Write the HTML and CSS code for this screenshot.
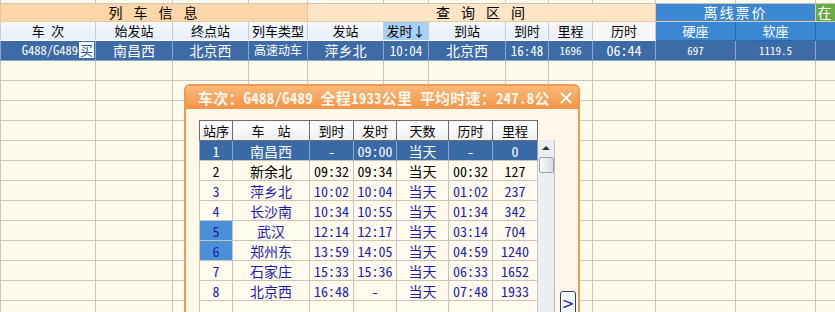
FILE: index.html
```html
<!DOCTYPE html>
<html lang="zh-CN">
  <head>
    <meta charset="UTF-8" />
    <meta name="viewport" content="width=device-width, initial-scale=1.0" />
    <title>列车查询</title>
    <link rel="stylesheet" href="styles.css">
  </head>
  <body>
    <table class="sheet">
      <colgroup>
        <col class="w-train"><col class="w-from"><col class="w-to"><col class="w-type">
        <col class="w-dep"><col class="w-dtime"><col class="w-arr"><col class="w-atime">
        <col class="w-km"><col class="w-dur"><col class="w-seat"><col class="w-seat"><col class="w-rest">
      </colgroup>
      <tr class="strip"><td></td><td></td><td></td><td></td><td></td><td></td><td></td><td></td><td></td><td></td><td></td><td></td><td></td></tr>
      <tr class="group">
        <td colspan="4" class="g-info">列 车 信 息</td>
        <td colspan="6" class="g-query">查 询 区 间</td>
        <td colspan="2" class="g-price">离线票价</td>
        <td class="g-online">在</td>
      </tr>
      <tr class="head">
        <td>车 次</td><td>始发站</td><td>终点站</td><td>列车类型</td><td>发站</td>
        <td class="sorted">发时↓</td><td>到站</td><td>到时</td><td>里程</td><td class="plain">历时</td>
        <td class="price">硬座</td><td class="price">软座</td><td class="price"></td>
      </tr>
      <tr class="selected">
        <td class="train">G488/G489<span class="buy">买</span></td>
        <td>南昌西</td><td>北京西</td><td class="kind">高速动车</td><td>萍乡北</td>
        <td class="time">10:04</td><td>北京西</td><td class="time">16:48</td>
        <td class="small">1696</td><td>06:44</td><td class="small">697</td><td class="small">1119.5</td><td></td>
      </tr>
      <tr><td></td><td></td><td></td><td></td><td></td><td></td><td></td><td></td><td></td><td></td><td></td><td></td><td></td></tr>
      <tr><td></td><td></td><td></td><td></td><td></td><td></td><td></td><td></td><td></td><td></td><td></td><td></td><td></td></tr>
      <tr><td></td><td></td><td></td><td></td><td></td><td></td><td></td><td></td><td></td><td></td><td></td><td></td><td></td></tr>
      <tr><td></td><td></td><td></td><td></td><td></td><td></td><td></td><td></td><td></td><td></td><td></td><td></td><td></td></tr>
      <tr><td></td><td></td><td></td><td></td><td></td><td></td><td></td><td></td><td></td><td></td><td></td><td></td><td></td></tr>
      <tr><td></td><td></td><td></td><td></td><td></td><td></td><td></td><td></td><td></td><td></td><td></td><td></td><td></td></tr>
      <tr><td></td><td></td><td></td><td></td><td></td><td></td><td></td><td></td><td></td><td></td><td></td><td></td><td></td></tr>
      <tr><td></td><td></td><td></td><td></td><td></td><td></td><td></td><td></td><td></td><td></td><td></td><td></td><td></td></tr>
      <tr><td></td><td></td><td></td><td></td><td></td><td></td><td></td><td></td><td></td><td></td><td></td><td></td><td></td></tr>
      <tr><td></td><td></td><td></td><td></td><td></td><td></td><td></td><td></td><td></td><td></td><td></td><td></td><td></td></tr>
      <tr><td></td><td></td><td></td><td></td><td></td><td></td><td></td><td></td><td></td><td></td><td></td><td></td><td></td></tr>
      <tr><td></td><td></td><td></td><td></td><td></td><td></td><td></td><td></td><td></td><td></td><td></td><td></td><td></td></tr>
      <tr><td></td><td></td><td></td><td></td><td></td><td></td><td></td><td></td><td></td><td></td><td></td><td></td><td></td></tr>
    </table>

    <!-- Fenêtre des arrêts -->
    <div class="popup">
      <div class="popup-title">
        <span>车次：G488/G489 全程1933公里 平均时速：247.8公</span>
        <svg class="close" width="12" height="12" viewBox="0 0 12 12">
          <path d="M1.5 1.5 L10.5 10.5 M10.5 1.5 L1.5 10.5" stroke="#fff" stroke-width="2" stroke-linecap="round" fill="none" />
        </svg>
      </div>
      <div class="popup-body">
        <table class="stops">
          <colgroup>
            <col class="s-seq"><col class="s-name"><col class="s-arr"><col class="s-dep">
            <col class="s-day"><col class="s-dur"><col class="s-km">
          </colgroup>
          <tr class="stops-head"><td>站序</td><td>车　站</td><td>到时</td><td>发时</td><td>天数</td><td>历时</td><td>里程</td></tr>
          <tr class="current"><td>1</td><td>南昌西</td><td>-</td><td>09:00</td><td>当天</td><td>-</td><td>0</td></tr>
          <tr><td>2</td><td>新余北</td><td>09:32</td><td>09:34</td><td>当天</td><td>00:32</td><td>127</td></tr>
          <tr class="blue"><td>3</td><td>萍乡北</td><td>10:02</td><td>10:04</td><td>当天</td><td>01:02</td><td>237</td></tr>
          <tr class="blue"><td>4</td><td>长沙南</td><td>10:34</td><td>10:55</td><td>当天</td><td>01:34</td><td>342</td></tr>
          <tr class="blue"><td class="mark">5</td><td>武汉</td><td>12:14</td><td>12:17</td><td>当天</td><td>03:14</td><td>704</td></tr>
          <tr class="blue"><td class="mark">6</td><td>郑州东</td><td>13:59</td><td>14:05</td><td>当天</td><td>04:59</td><td>1240</td></tr>
          <tr class="blue"><td>7</td><td>石家庄</td><td>15:33</td><td>15:36</td><td>当天</td><td>06:33</td><td>1652</td></tr>
          <tr class="blue"><td>8</td><td>北京西</td><td>16:48</td><td>-</td><td>当天</td><td>07:48</td><td>1933</td></tr>
          <tr><td></td><td></td><td></td><td></td><td></td><td></td><td></td></tr>
        </table>
        <div class="scrollbar">
          <span class="arrow-up"></span>
          <span class="thumb"></span>
        </div>
        <div class="side">
          <button class="next">&gt;</button>
        </div>
      </div>
    </div>
  </body>
</html>
```

FILE: styles.css
```css
body {
  margin: 0;
  background-color: #fffbeb;
  font-family: "Noto Sans Mono CJK SC", "Noto Sans CJK SC", "DejaVu Sans Mono", monospace;
  font-size: 13px;
  color: #000;
  overflow: hidden;
  position: relative;
}
.sheet {
  border-collapse: collapse;
  table-layout: fixed;
  width: 835px;
}
.w-train { width: 95px; }
.w-from { width: 77px; }
.w-to { width: 76px; }
.w-type { width: 59px; }
.w-dep { width: 76px; }
.w-dtime { width: 45px; }
.w-arr { width: 77px; }
.w-atime { width: 43px; }
.w-km { width: 44px; }
.w-dur { width: 63px; }
.w-seat { width: 80px; }
.w-rest { width: 20px; }
.sheet td {
  border: 1px solid #c8c6c2;
  padding: 0;
  text-align: center;
  white-space: nowrap;
  overflow: hidden;
  line-height: 1;
}
.sheet tr { height: 20px; }
.sheet tr.strip { height: 3px; }
.sheet tr.strip td { border-top: none; }
.sheet tr.group { height: 18px; }
.sheet tr.head { height: 19px; }
.group td {
  font-size: 14px;
  letter-spacing: 2px;
  border-color: #e8c8a0;
}
.g-info { background-color: #fcd6a8; }
.g-query { background-color: #fde5c6; }
.g-price {
  background-color: #3c87d4;
  color: #fff;
  letter-spacing: 0;
}
.g-online {
  background-color: #6aaa44;
  color: #fff;
  text-align: left;
}
.head td {
  background: linear-gradient(#f6f8fc, #e6edf8);
  border-color: #c4ccd8;
  border-bottom-color: #fff;
}
.head td.plain { background: #f6f6f8; }
.head td.sorted { background: #a8cff5; }
.head td.price {
  background: #3c87d4;
  color: #fff;
  border-color: #2c68ac;
}
.selected td {
  background-color: #3d6ba6;
  color: #fff;
  font-size: 14px;
  border-color: #8aa6ca;
}
.selected td.small { font-size: 11px; }
.selected td.kind { font-size: 12px; }
.selected td.time { font-size: 13px; }
.selected td.train {
  text-align: right;
  font-size: 12.5px;
  padding-right: 1px;
}
.buy {
  display: inline-block;
  background-color: #fff;
  color: #1f4fc0;
  font-size: 13px;
  padding: 1px 1px 2px;
  margin-left: 1px;
}

/* Fenêtre des arrêts */
.popup {
  position: absolute;
  left: 184px;
  top: 84px;
  width: 392px;
  height: 250px;
  border: 2px solid #ee9a52;
  border-radius: 6px 6px 0 0;
  background-color: #fff8ea;
}
.popup-title {
  height: 23px;
  background: linear-gradient(#f9b878, #f39446);
  display: flex;
  align-items: center;
  justify-content: space-between;
  padding: 0 6px 0 12px;
  color: #fff6ec;
  font-size: 15px;
  font-weight: bold;
  letter-spacing: 0.2px;
  white-space: nowrap;
  border-radius: 4px 4px 0 0;
}
.popup-body {
  display: flex;
  align-items: flex-start;
  padding: 11px 0 0 13px;
}
.stops {
  border-collapse: collapse;
  table-layout: fixed;
  width: 338px;
}
.s-seq { width: 33px; }
.s-name { width: 77px; }
.s-arr { width: 44px; }
.s-dep { width: 43px; }
.s-day { width: 52px; }
.s-dur { width: 44px; }
.s-km { width: 45px; }
.stops tr { height: 20px; }
.stops td {
  border: 1px solid #c8c4bc;
  background-color: #fffbee;
  text-align: center;
  padding: 0;
  font-size: 14px;
  line-height: 1;
  white-space: nowrap;
}
.stops-head td {
  background: linear-gradient(#ffffff, #eeeeee);
  border-color: #6e6e6e;
  font-size: 13px;
}
.stops tr.current td {
  background-color: #3a6aa6;
  color: #fff;
  border-color: #8aa6ca;
  border-top: 1px dotted #333;
  border-bottom: 1px dotted #333;
}
.stops tr.blue td { color: #1c1caa; }
.stops td.mark {
  background-color: #4a90d8;
  color: #fff;
}
.scrollbar {
  margin-top: 20px;
  width: 16px;
  height: 200px;
  background-color: #eceef2;
  border-right: 1px solid #b8bcc4;
  display: flex;
  flex-direction: column;
  align-items: center;
}
.arrow-up {
  margin-top: 6px;
  width: 0;
  height: 0;
  border-left: 4px solid transparent;
  border-right: 4px solid transparent;
  border-bottom: 4px solid #333;
}
.thumb {
  margin-top: 7px;
  width: 13px;
  height: 14px;
  border: 1px solid #9aa0a8;
  border-radius: 2px;
  background: linear-gradient(90deg, #fafafa, #d8dce2);
}
.side {
  padding: 171px 0 0 5px;
}
.next {
  width: 16px;
  height: 26px;
  padding: 0;
  border: 1px solid #2c4466;
  border-radius: 3px;
  background-color: #f2f6fb;
  color: #1c1caa;
  font-family: "DejaVu Sans", sans-serif;
  font-size: 15px;
  line-height: 20px;
}
```
